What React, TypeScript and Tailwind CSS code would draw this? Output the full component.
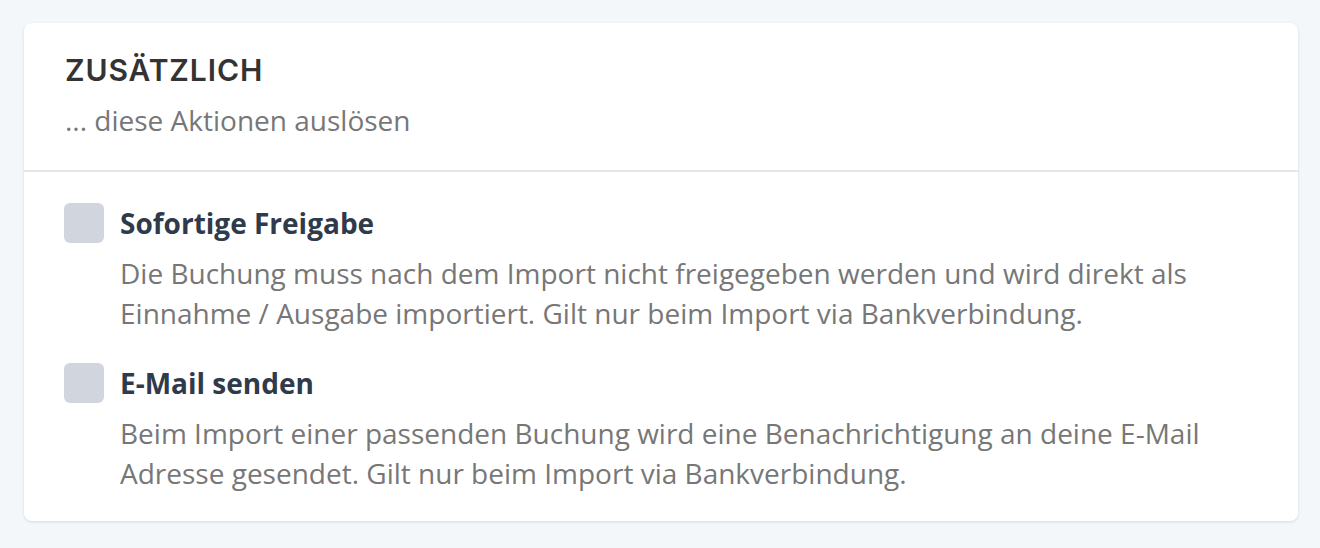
const options = [
  {
    title: 'Sofortige Freigabe',
    text: 'Die Buchung muss nach dem Import nicht freigegeben werden und wird direkt als Einnahme / Ausgabe importiert. Gilt nur beim Import via Bankverbindung.',
  },
  {
    title: 'E-Mail senden',
    text: 'Beim Import einer passenden Buchung wird eine Benachrichtigung an deine E-Mail Adresse gesendet. Gilt nur beim Import via Bankverbindung.',
  },
];

export default function App() {
  return (
    <div className="min-h-[548px] bg-[#f4f7fa] pt-[23px] pb-[27px] pl-[24px] pr-[22px] font-['Open_Sans',sans-serif]">
      <div className="bg-white rounded-lg shadow-[0_1px_3px_rgba(0,0,0,0.12)]">
        {/* header */}
        <div className="px-[41px] pt-[29px] pb-[30px] border-b-2 border-[#e6e6e6]">
          <h2 className="font-['Inter',sans-serif] font-semibold text-[30px] leading-[36px] text-[#333] tracking-[0.9px]">
            ZUSÄTZLICH
          </h2>
          <p className="mt-[12px] text-[28px] leading-[40px] text-[#777]">... diese Aktionen auslösen</p>
        </div>

        {/* options */}
        <div className="px-[40px] pt-[31px] pb-[28px] flex flex-col gap-[30px]">
          {options.map((o) => (
            <label key={o.title} className="flex gap-[16px] cursor-pointer">
              <span className="w-[40px] h-[40px] rounded-md bg-[#d1d5de] flex-none" />
              <span className="flex flex-col">
                <span className="text-[28px] leading-[40px] font-bold text-[#2f3a4b]">{o.title}</span>
                <span className="mt-[10px] text-[28px] leading-[40px] text-[#777] max-w-[1100px]">{o.text}</span>
              </span>
            </label>
          ))}
        </div>
      </div>
    </div>
  );
}
